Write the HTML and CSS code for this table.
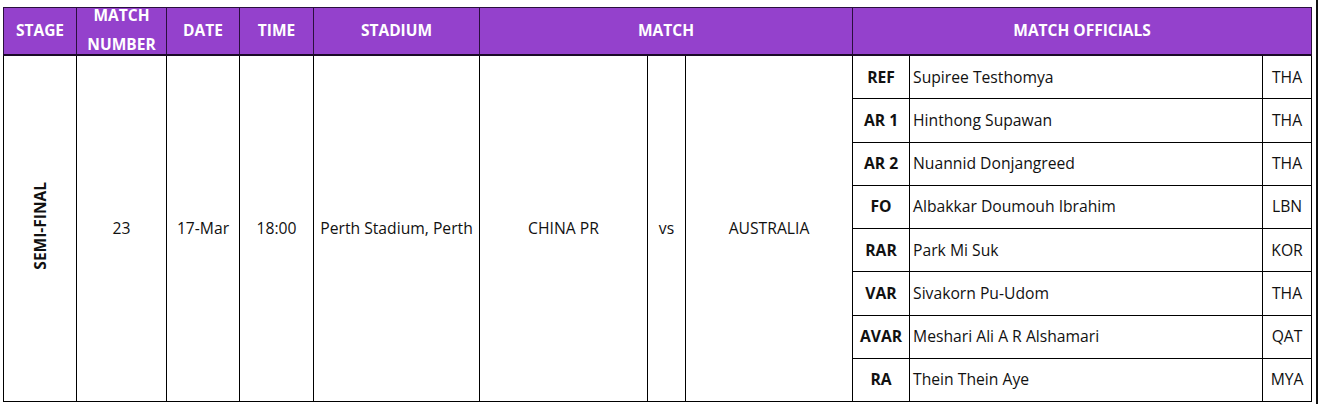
FILE: index.html
```html
<!DOCTYPE html>
<html>
<head>
<meta charset="utf-8">
<link rel="stylesheet" href="styles.css">
</head>
<body>
<div class="page">
  <table class="sched">
    <colgroup>
      <col class="c-stage"><col class="c-num"><col class="c-date"><col class="c-time"><col class="c-stad">
      <col class="c-team"><col class="c-vs"><col class="c-team2"><col class="c-role"><col class="c-name"><col class="c-nat">
    </colgroup>
    <thead>
      <tr>
        <th>STAGE</th>
        <th><div class="two">MATCH<br>NUMBER</div></th>
        <th>DATE</th>
        <th>TIME</th>
        <th>STADIUM</th>
        <th colspan="3">MATCH</th>
        <th colspan="3">MATCH OFFICIALS</th>
      </tr>
    </thead>
    <tbody>
      <tr>
        <td rowspan="8" class="stage"><span>SEMI-FINAL</span></td>
        <td rowspan="8">23</td>
        <td rowspan="8">17-Mar</td>
        <td rowspan="8">18:00</td>
        <td rowspan="8">Perth Stadium, Perth</td>
        <td rowspan="8">CHINA PR</td>
        <td rowspan="8">vs</td>
        <td rowspan="8">AUSTRALIA</td>
        <td class="role">REF</td><td class="name">Supiree Testhomya</td><td>THA</td>
      </tr>
      <tr><td class="role">AR 1</td><td class="name">Hinthong Supawan</td><td>THA</td></tr>
      <tr><td class="role">AR 2</td><td class="name">Nuannid Donjangreed</td><td>THA</td></tr>
      <tr><td class="role">FO</td><td class="name">Albakkar Doumouh Ibrahim</td><td>LBN</td></tr>
      <tr><td class="role">RAR</td><td class="name">Park Mi Suk</td><td>KOR</td></tr>
      <tr><td class="role">VAR</td><td class="name">Sivakorn Pu-Udom</td><td>THA</td></tr>
      <tr><td class="role">AVAR</td><td class="name">Meshari Ali A R Alshamari</td><td>QAT</td></tr>
      <tr><td class="role">RA</td><td class="name">Thein Thein Aye</td><td>MYA</td></tr>
    </tbody>
  </table>
</div>
</body>
</html>
```

FILE: styles.css
```css
html, body {
  margin: 0;
  padding: 0;
  background: #fff;
}
.page {
  width: 1318px;
  height: 404px;
  padding: 7px 0 0 3px;
  box-sizing: border-box;
  border-right: 2px solid #111;
  font-family: "Open Sans", "Liberation Sans", sans-serif;
  color: #111;
}
.sched {
  border-collapse: collapse;
  table-layout: fixed;
  width: 1308px;
}
.c-stage { width: 73px; }
.c-num { width: 90px; }
.c-date { width: 73px; }
.c-time { width: 74px; }
.c-stad { width: 166px; }
.c-team { width: 168px; }
.c-vs { width: 38px; }
.c-team2 { width: 167px; }
.c-role { width: 57px; }
.c-name { width: 353px; }
.c-nat { width: 49px; }

.sched th {
  background: #9441cc;
  color: #fff;
  font-weight: 700;
  font-size: 15.5px;
  height: 44px;
  padding: 0 0 2px 0;
  border: 1px solid #2a0f3d;
  border-bottom: 2px solid #1c0a29;
  text-align: center;
  vertical-align: middle;
}
.sched th .two {
  height: 44px;
  line-height: 29px;
  display: flex;
  flex-direction: column;
  justify-content: center;
  overflow: visible;
}
.sched td {
  border: 1px solid #000;
  font-size: 15.7px;
  font-weight: 500;
  text-align: center;
  vertical-align: middle;
  padding: 0 0 1px 0;
  height: 41.25px;
}
.sched td.role {
  font-weight: 700;
}
.sched td.name {
  text-align: left;
  padding-left: 3px;
}
.sched td.stage span {
  display: inline-block;
  writing-mode: vertical-rl;
  transform: rotate(180deg);
  font-weight: 700;
  font-size: 15.5px;
}
```
